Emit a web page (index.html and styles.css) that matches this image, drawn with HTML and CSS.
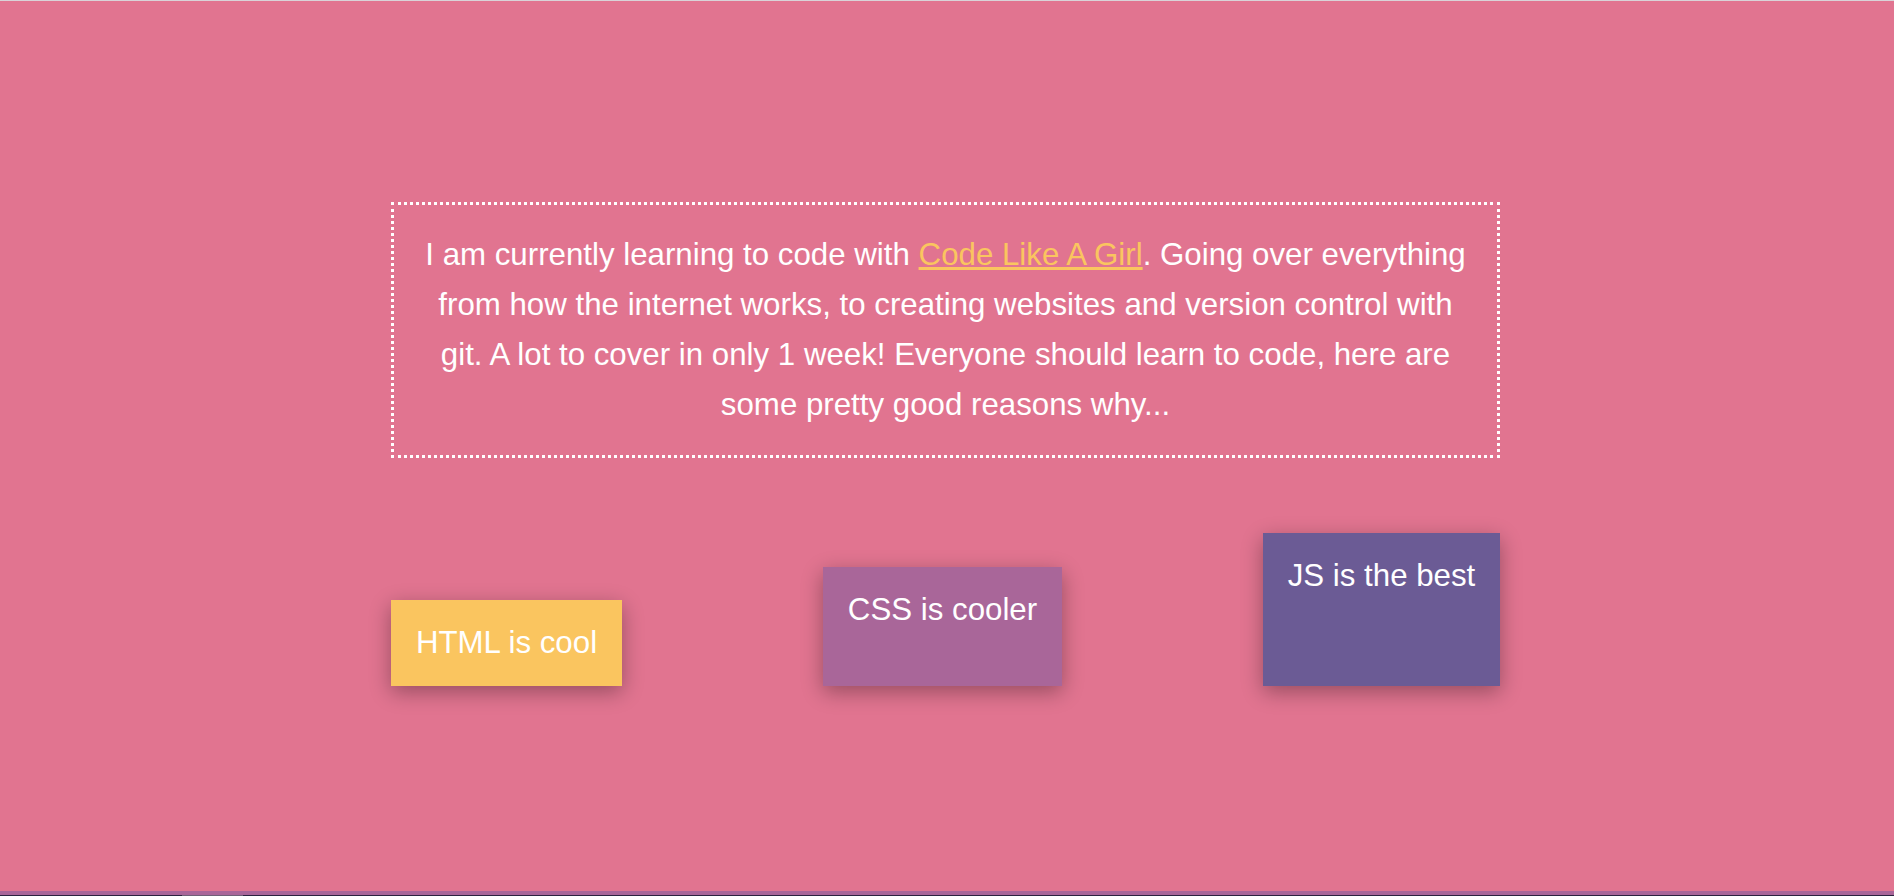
FILE: index.html
```
<!DOCTYPE html>
<html lang="en">
<head>
<meta charset="utf-8">
<title>Learning to code</title>
<link rel="stylesheet" href="styles.css">
</head>
<body>
<main class="about">
  <p class="intro">I am currently learning to code with <a class="link" href="#">Code Like A Girl</a>. Going over everything from how the internet works, to creating websites and version control with git. A lot to cover in only 1 week! Everyone should learn to code, here are some pretty good reasons why...</p>
  <div class="reasons">
    <div class="card html">HTML is cool</div>
    <div class="card css">CSS is cooler</div>
    <div class="card js">JS is the best</div>
  </div>
</main>
<footer class="footer"><div class="strip"></div></footer>
</body>
</html>
```
FILE: styles.css
```
* { box-sizing: border-box; }
body {
  margin: 0;
  height: 896px;
  overflow: hidden;
  display: flex;
  flex-direction: column;
  background: #e17490;
  color: #fff;
  font: 31.25px/50px "Liberation Sans", Arial, sans-serif;
}
.about {
  flex: 1;
  border-top: 1px solid #d9d3d8;
  padding: 201px 394px 0 391px;
}
.intro {
  margin: 0;
  height: 256px;
  padding: 25px;
  border: 3px dotted #fff;
  text-align: center;
}
.link {
  color: #fac55f;
  text-decoration-thickness: 3px;
  text-decoration-skip-ink: none;
}
.reasons {
  display: flex;
  justify-content: space-between;
  align-items: flex-end;
  height: 153px;
  margin-top: 75px;
}
.card {
  padding: 18px 0;
  text-align: center;
  white-space: nowrap;
  box-shadow: 0 6px 20px rgba(0, 0, 0, .33);
}
.html { width: 231px; height: 86px; background: #fac55f; }
.css { width: 239px; height: 119px; background: #a96699; }
.js { width: 237px; height: 153px; background: #6b5b95; }
.footer {
  height: 5px;
  background: #2b2340;
  border-top: 4px solid #a96699;
}
.strip {
  width: 61px;
  height: 1px;
  margin-left: 182px;
  background: #6f6078;
}
```
